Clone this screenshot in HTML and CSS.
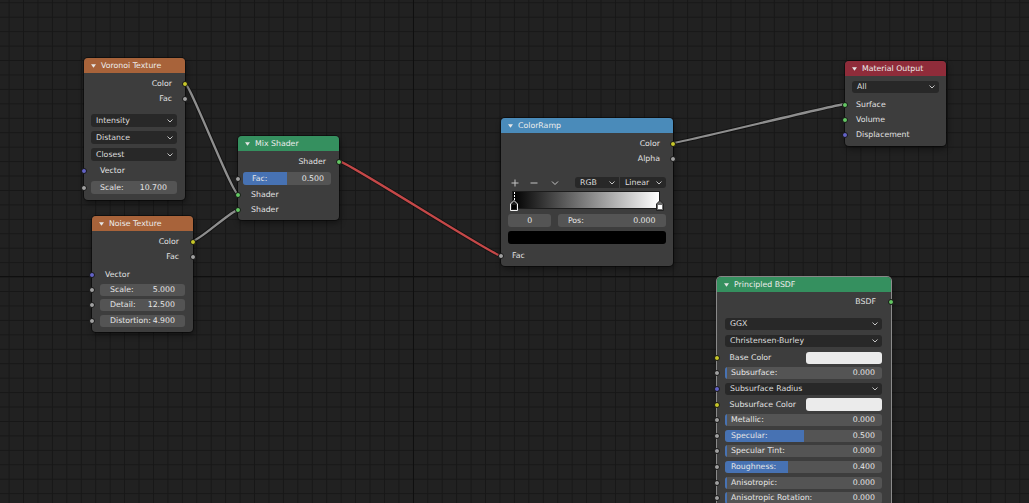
FILE: index.html
```html
<!DOCTYPE html>
<html>
<head>
<meta charset="utf-8">
<title>Node Editor</title>
<link rel="stylesheet" href="styles.css">
</head>
<body>
<div class="canvas">
  <div class="major-v"></div>
  <div class="major-h"></div>

  <svg class="wires" width="1029" height="503" viewBox="0 0 1029 503">
    <path class="wire-o" d="M184.5 83 C190 83 232 194 238 194"/>
    <path class="wire" d="M184.5 83 C190 83 232 194 238 194"/>
    <path class="wire-o" d="M192.7 241 C199 241 232 210 238 210"/>
    <path class="wire" d="M192.7 241 C199 241 232 210 238 210"/>
    <path class="wire-o" d="M339 161 C346 161 494 256 501 256"/>
    <path class="wire red" d="M339 161 C346 161 494 256 501 256"/>
    <path class="wire-o" d="M673 143 C680 143 838 104 845 104"/>
    <path class="wire" d="M673 143 C680 143 838 104 845 104"/>
  </svg>

  <!-- Voronoi Texture -->
  <div class="node voronoi">
    <div class="hdr tex"><svg class="tri" width="5" height="4" viewBox="0 0 5 4"><polygon points="0,0.3 5,0.3 2.5,3.8"/></svg><span>Voronoi Texture</span></div>
    <div class="body vb">
      <div class="row out">Color<i class="sock r y"></i></div>
      <div class="row out">Fac<i class="sock r g"></i></div>
      <div class="sp6"></div>
      <div class="frow"><div class="drop"><span>Intensity</span><svg class="chev" width="6" height="4" viewBox="0 0 6 4"><polyline points="0.5,0.5 3,3 5.5,0.5"/></svg></div></div>
      <div class="frow"><div class="drop"><span>Distance</span><svg class="chev" width="6" height="4" viewBox="0 0 6 4"><polyline points="0.5,0.5 3,3 5.5,0.5"/></svg></div></div>
      <div class="frow"><div class="drop"><span>Closest</span><svg class="chev" width="6" height="4" viewBox="0 0 6 4"><polyline points="0.5,0.5 3,3 5.5,0.5"/></svg></div></div>
      <div class="row in vvec">Vector<i class="sock l b"></i></div>
      <div class="frow"><div class="slider vsl"><span>Scale:</span><span>10.700</span></div><i class="sock l g"></i></div>
    </div>
  </div>

  <!-- Mix Shader -->
  <div class="node mix">
    <div class="hdr shd"><svg class="tri" width="5" height="4" viewBox="0 0 5 4"><polygon points="0,0.3 5,0.3 2.5,3.8"/></svg><span>Mix Shader</span></div>
    <div class="body">
      <div class="row out">Shader<i class="sock r gr"></i></div>
      <div class="sp1"></div>
      <div class="frow mfr"><div class="slider msl"><i class="fill" style="width:50%"></i><span>Fac:</span><span>0.500</span></div><i class="sock l g"></i></div>
      <div class="row in">Shader<i class="sock l gr"></i></div>
      <div class="row in">Shader<i class="sock l gr"></i></div>
    </div>
  </div>

  <!-- Noise Texture -->
  <div class="node noise">
    <div class="hdr tex"><svg class="tri" width="5" height="4" viewBox="0 0 5 4"><polygon points="0,0.3 5,0.3 2.5,3.8"/></svg><span>Noise Texture</span></div>
    <div class="body">
      <div class="row out nout">Color<i class="sock r y"></i></div>
      <div class="row out nout">Fac<i class="sock r g"></i></div>
      <div class="sp3"></div>
      <div class="row in">Vector<i class="sock l b"></i></div>
      <div class="srow nsr"><div class="slider nsl"><span>Scale:</span><span>5.000</span></div><i class="sock l g"></i></div>
      <div class="srow nsr"><div class="slider nsl"><span>Detail:</span><span>12.500</span></div><i class="sock l g"></i></div>
      <div class="srow nsr"><div class="slider nsl"><span>Distortion:</span><span>4.900</span></div><i class="sock l g"></i></div>
    </div>
  </div>

  <!-- ColorRamp -->
  <div class="node ramp">
    <div class="hdr cnv"><svg class="tri" width="5" height="4" viewBox="0 0 5 4"><polygon points="0,0.3 5,0.3 2.5,3.8"/></svg><span>ColorRamp</span></div>
    <div class="body">
      <div class="row out">Color<i class="sock r y"></i></div>
      <div class="row out">Alpha<i class="sock r g"></i></div>
      <div class="sp9"></div>
      <div class="ctrl">
        <svg class="ico plus" width="8" height="8" viewBox="0 0 8 8"><path d="M4 0.5V7.5M0.5 4H7.5"/></svg>
        <svg class="ico minus" width="8" height="8" viewBox="0 0 8 8"><path d="M0.5 4H7.5"/></svg>
        <svg class="ico down" width="8" height="8" viewBox="0 0 8 8"><polyline points="1,2.5 4,5.5 7,2.5"/></svg>
        <div class="seg">
          <div class="segi"><span>RGB</span><svg class="chev" width="6" height="4" viewBox="0 0 6 4"><polyline points="0.5,0.5 3,3 5.5,0.5"/></svg></div>
          <div class="segi"><span>Linear</span><svg class="chev" width="6" height="4" viewBox="0 0 6 4"><polyline points="0.5,0.5 3,3 5.5,0.5"/></svg></div>
        </div>
      </div>
      <div class="rampbar">
        <div class="grad"></div>
        <div class="dash"></div>
        <svg class="stop s0" width="8" height="11" viewBox="0 0 8 11"><polygon points="4,0.5 7.5,4 7.5,10.5 0.5,10.5 0.5,4" class="s0o"/><rect x="2" y="5" width="4" height="4" class="s0i"/></svg>
        <svg class="stop s1" width="8" height="11" viewBox="0 0 8 11"><polygon points="4,0.5 7.5,4 7.5,10.5 0.5,10.5 0.5,4" class="s1o"/><rect x="2" y="5" width="4" height="4" class="s1i"/></svg>
      </div>
      <div class="sp2"></div>
      <div class="frow rfr">
        <div class="num"><span>0</span></div>
        <div class="slider pos"><span>Pos:</span><span>0.000</span></div>
      </div>
      <div class="frow rfr"><div class="swatch"></div></div>
      <div class="sp2"></div>
      <div class="row in rin">Fac<i class="sock l g"></i></div>
    </div>
  </div>

  <!-- Material Output -->
  <div class="node matout">
    <div class="hdr outp"><svg class="tri" width="5" height="4" viewBox="0 0 5 4"><polygon points="0,0.3 5,0.3 2.5,3.8"/></svg><span>Material Output</span></div>
    <div class="body mb">
      <div class="frow mofr"><div class="drop d12"><span>All</span><svg class="chev" width="6" height="4" viewBox="0 0 6 4"><polyline points="0.5,0.5 3,3 5.5,0.5"/></svg></div></div>
      <div class="sp2"></div>
      <div class="row in moin">Surface<i class="sock l gr"></i></div>
      <div class="row in moin">Volume<i class="sock l gr"></i></div>
      <div class="row in moin">Displacement<i class="sock l b"></i></div>
    </div>
  </div>

  <!-- Principled BSDF -->
  <div class="node bsdf">
    <div class="hdr shd"><svg class="tri" width="5" height="4" viewBox="0 0 5 4"><polygon points="0,0.3 5,0.3 2.5,3.8"/></svg><span>Principled BSDF</span></div>
    <div class="body pb">
      <div class="row out pout">BSDF<i class="sock r gr"></i></div>
      <div class="sp6"></div>
      <div class="frow pfr"><div class="drop d12"><span>GGX</span><svg class="chev" width="6" height="4" viewBox="0 0 6 4"><polyline points="0.5,0.5 3,3 5.5,0.5"/></svg></div></div>
      <div class="frow pfr"><div class="drop d12"><span>Christensen-Burley</span><svg class="chev" width="6" height="4" viewBox="0 0 6 4"><polyline points="0.5,0.5 3,3 5.5,0.5"/></svg></div></div>
      <div class="sp1"></div>
      <div class="prow"><span class="plab">Base Color</span><div class="white"></div><i class="sock l y"></i></div>
      <div class="prow"><div class="slider psl"><i class="fill zero"></i><span>Subsurface:</span><span>0.000</span></div><i class="sock l g"></i></div>
      <div class="prow"><div class="drop d12"><span>Subsurface Radius</span><svg class="chev" width="6" height="4" viewBox="0 0 6 4"><polyline points="0.5,0.5 3,3 5.5,0.5"/></svg></div><i class="sock l b"></i></div>
      <div class="prow"><span class="plab">Subsurface Color</span><div class="white"></div><i class="sock l y"></i></div>
      <div class="prow"><div class="slider psl"><i class="fill zero"></i><span>Metallic:</span><span>0.000</span></div><i class="sock l g"></i></div>
      <div class="prow"><div class="slider psl"><i class="fill" style="width:50%"></i><span>Specular:</span><span>0.500</span></div><i class="sock l g"></i></div>
      <div class="prow"><div class="slider psl"><i class="fill zero"></i><span>Specular Tint:</span><span>0.000</span></div><i class="sock l g"></i></div>
      <div class="prow"><div class="slider psl"><i class="fill" style="width:40%"></i><span>Roughness:</span><span>0.400</span></div><i class="sock l g"></i></div>
      <div class="prow"><div class="slider psl"><i class="fill zero"></i><span>Anisotropic:</span><span>0.000</span></div><i class="sock l g"></i></div>
      <div class="prow"><div class="slider psl"><i class="fill zero"></i><span>Anisotropic Rotation:</span><span>0.000</span></div><i class="sock l g"></i></div>
    </div>
  </div>
</div>
</body>
</html>
```

FILE: styles.css
```css
* { box-sizing: border-box; margin: 0; padding: 0; }
html, body { width: 1029px; height: 503px; overflow: hidden; }
body {
  background: #202020;
  font-family: "DejaVu Sans", "Liberation Sans", sans-serif;
  font-size: 7.8px;
  line-height: 1;
  color: #e2e2e2;
}
.canvas {
  position: relative;
  width: 1029px;
  height: 503px;
  overflow: hidden;
  background-color: #212121;
  background-image:
    linear-gradient(to right, #171717 1px, transparent 1px),
    linear-gradient(to bottom, #171717 1px, transparent 1px);
  background-size: 14.44px 14.44px;
  background-position: 8.6px 2.3px;
}
.major-v { position: absolute; left: 413px; top: 0; width: 1px; height: 503px; background: #0f0f0f; }
.major-h { position: absolute; top: 276px; left: 0; width: 1029px; height: 1px; background: #0f0f0f; }

.wires { position: absolute; left: 0; top: 0; }
.wire-o { fill: none; stroke: rgba(10,10,10,0.6); stroke-width: 4.2; stroke-linecap: round; }
.wire { fill: none; stroke: #8e8e8e; stroke-width: 2.3; stroke-linecap: round; }
.wire.red { stroke: #c44848; }

/* nodes */
.node {
  position: absolute;
  background: #3d3d3d;
  border-radius: 4px;
  box-shadow: 0 0 0 1px rgba(0,0,0,0.45), 1px 3px 6px rgba(0,0,0,0.45);
}
.voronoi { left: 84px; top: 58px; width: 101px; }
.mix { left: 238px; top: 136px; width: 101px; }
.noise { left: 92px; top: 216px; width: 101px; }
.ramp { left: 501px; top: 118px; width: 172px; }
.matout { left: 845px; top: 61px; width: 101px; }
.bsdf { left: 717px; top: 277px; width: 174px; box-shadow: 0 0 0 1px rgba(235,235,235,0.55), 1px 3px 6px rgba(0,0,0,0.45); }

.hdr {
  height: 15px;
  display: flex;
  align-items: center;
  gap: 5px;
  padding-left: 7px;
  border-radius: 4px 4px 0 0;
  color: #ededed;
  white-space: nowrap;
}
.tri polygon { fill: #e6e6e6; }
.tex { background: #a8633a; }
.shd { background: #35905f; }
.cnv { background: #4a8bba; }
.outp { background: #8f2c3a; }

.body { display: flex; flex-direction: column; padding: 3px 0 3px; }
.vb { padding-bottom: 4px; }
.mb { padding: 2px 0 4px; }
.pb { padding: 2px 0 40px; }

.sp1 { height: 1px; }
.sp2 { height: 2px; }
.sp3 { height: 3px; }
.sp6 { height: 6px; }
.sp9 { height: 9px; }

.row { position: relative; height: 15px; display: flex; align-items: center; white-space: nowrap; }
.out { justify-content: flex-end; padding-right: 13px; }
.in { padding-left: 13px; }
.vvec { height: 16px; padding-left: 16px; }
.nout { padding-right: 14px; }
.rin { padding-left: 11px; }
.moin { padding-left: 11px; }
.pout { padding-right: 15px; }

.sock {
  position: absolute;
  top: 50%;
  width: 6px;
  height: 6px;
  margin-top: -3px;
  border-radius: 50%;
  border: 1px solid #161616;
}
.sock.l { left: -3px; }
.sock.r { right: -3px; }
.y { background: #c7c729; }
.g { background: #a1a1a1; }
.gr { background: #63c763; }
.b { background: #6363c7; }

.frow { position: relative; height: 17px; display: flex; align-items: center; padding: 0 8px 0 7px; gap: 7px; }
.mfr { padding: 0 8px 0 5px; }
.rfr { padding: 0 7px 0 7px; }
.mofr { padding: 0 7px 0 7px; }
.pfr { padding: 0 9px 0 8px; }
.srow { position: relative; height: 15.5px; display: flex; align-items: center; }
.nsr { padding: 0 8px; }
.prow { position: relative; height: 15.6px; display: flex; align-items: center; padding: 0 9px 0 8px; }

.drop {
  flex: 1;
  height: 13px;
  background: #282828;
  border-radius: 3px;
  display: flex;
  align-items: center;
  justify-content: space-between;
  padding: 0 4px 0 5px;
  white-space: nowrap;
  color: #dedede;
}
.d12 { height: 12px; }
.chev polyline, .ico path, .ico polyline { fill: none; stroke: #c4c4c4; stroke-width: 1; }

.slider {
  flex: 1;
  height: 13px;
  position: relative;
  overflow: hidden;
  background: #545454;
  border-radius: 3px;
  display: flex;
  align-items: center;
  justify-content: space-between;
  white-space: nowrap;
  color: #e6e6e6;
}
.slider span { position: relative; }
.fill { position: absolute; left: 0; top: 0; bottom: 0; background: #4772b3; }
.fill.zero { width: 1.5px; }
.vsl { padding: 0 10px 0 9px; }
.msl { padding: 0 7px 0 9px; }
.nsl { height: 12px; padding: 0 10px; }
.psl { height: 12px; padding: 0 7px 0 6px; }

.plab { flex: 1; padding-left: 4.5px; white-space: nowrap; }
.white { width: 76px; height: 12.5px; background: #ebebeb; border-radius: 3px; }

/* color ramp */
.ctrl { height: 15px; display: flex; align-items: center; padding-left: 10px; }
.ico { flex: none; }
.minus { margin-left: 11px; }
.down { margin-left: 13px; }
.seg { margin-left: 16px; display: flex; gap: 1px; height: 11px; }
.segi {
  height: 11px;
  background: #282828;
  display: flex;
  align-items: center;
  justify-content: space-between;
  padding: 0 4px 0 5px;
  color: #dedede;
}
.segi:first-child { width: 44px; border-radius: 3px 0 0 3px; }
.segi:last-child { width: 45.7px; border-radius: 0 3px 3px 0; }

.rampbar { position: relative; height: 20px; }
.grad {
  position: absolute;
  left: 12.3px;
  top: 2px;
  width: 146px;
  height: 15.7px;
  background: linear-gradient(to right, #000, #fff);
  box-shadow: 0 0 0 1px #1c1c1c;
}
.dash {
  position: absolute;
  left: 12.6px;
  top: 2px;
  width: 1px;
  height: 8px;
  background: repeating-linear-gradient(to bottom, #fff 0 2px, transparent 2px 3px);
}
.stop { position: absolute; top: 10.3px; }
.s0 { left: 9.2px; }
.s1 { left: 154.7px; }
.s0o { fill: #1e1e1e; stroke: #f2f2f2; stroke-width: 1; }
.s0i { fill: #000; }
.s1o { fill: #6a6a6a; stroke: #222; stroke-width: 1; }
.s1i { fill: #fff; }

.num {
  width: 43.4px;
  height: 12.7px;
  background: #545454;
  border-radius: 3px;
  display: flex;
  align-items: center;
  justify-content: center;
  color: #e6e6e6;
}
.pos { height: 12.7px; padding: 0 10.5px 0 9.5px; }
.swatch { flex: 1; height: 12.5px; background: #000; border-radius: 3px; }
```
